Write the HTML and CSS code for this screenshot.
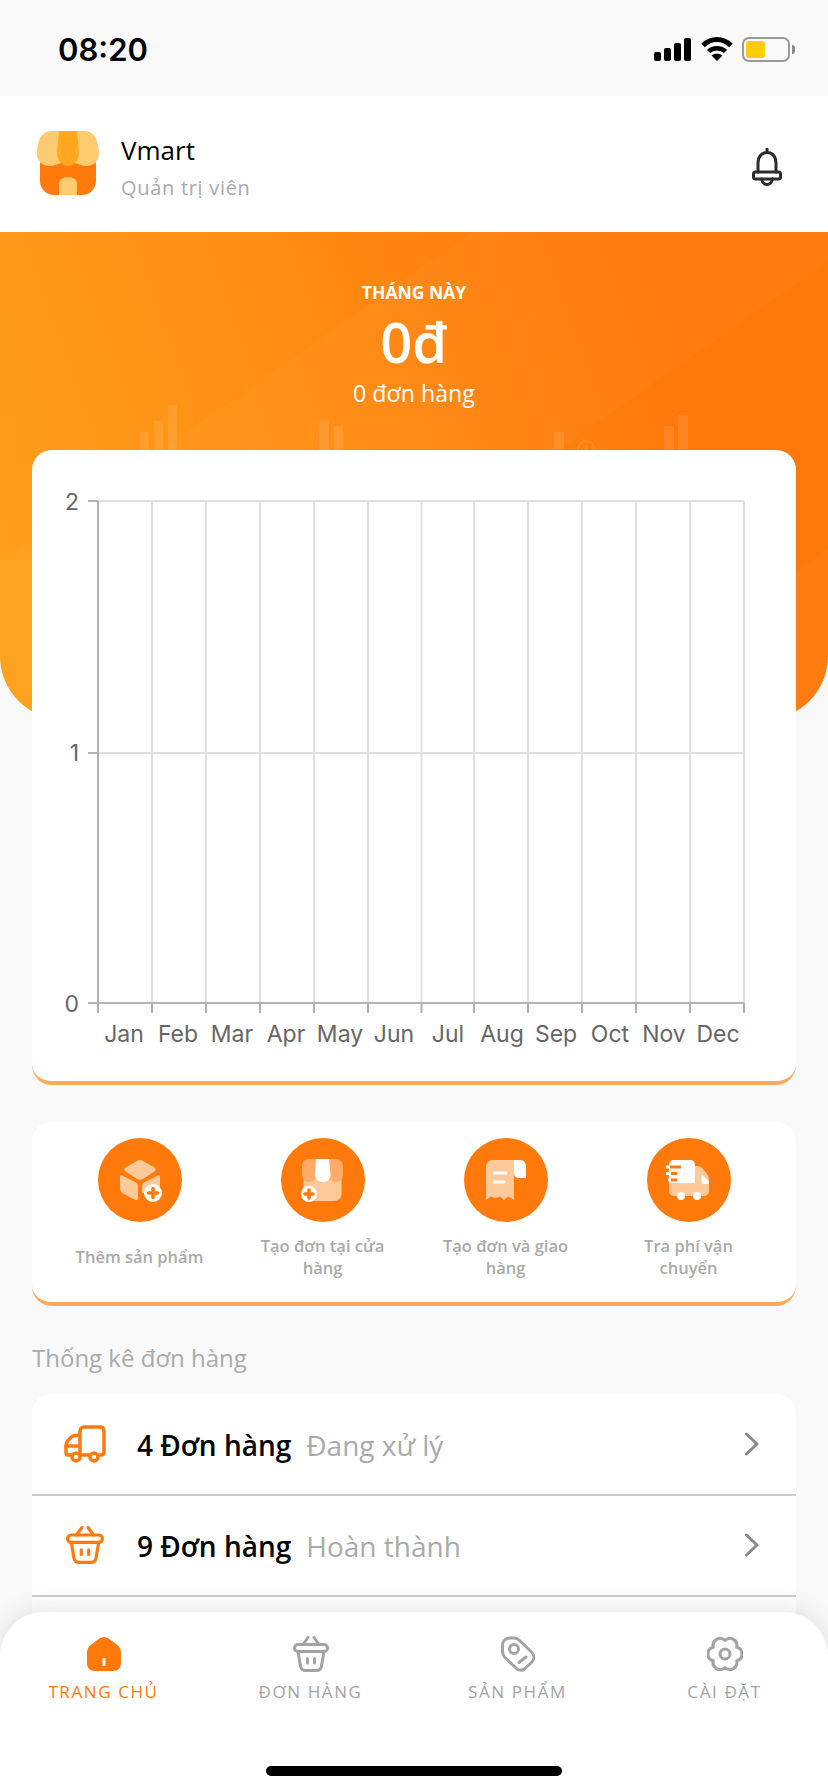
FILE: index.html
```html
<!DOCTYPE html>
<html lang="vi">
<head>
<meta charset="utf-8">
<title>Vmart</title>
<link rel="stylesheet" href="styles.css">
</head>
<body>
<svg class="defs" width="0" height="0" aria-hidden="true">
  <symbol id="basket" viewBox="0 0 36 36">
    <path d="M10 8.500 15 1.500M26 8.500 21 1.500M5 15.500 7.500 30C8 33 9.500 34.500 12.500 34.500H23.500C26.500 34.500 28 33 28.500 30L31 15.500M14.500 22.500V27M21.500 22.500V27" fill="none" stroke="currentColor" stroke-width="3" stroke-linecap="round" stroke-linejoin="round"/>
    <rect x="1.500" y="8.500" width="33" height="7" rx="3.500" fill="none" stroke="currentColor" stroke-width="3"/>
  </symbol>
</svg>
<div class="app">
  <div class="status">
    <span class="time">08:20</span>
    <div class="status-icons">
      <svg class="signal" width="37" height="23" viewBox="0 0 37 23"><rect y="14" width="7" height="9" rx="2"/><rect x="10" y="10" width="7" height="13" rx="2"/><rect x="20" y="5" width="7" height="18" rx="2"/><rect x="30" width="7" height="23" rx="2"/></svg>
      <svg class="wifi" width="32" height="24" viewBox="0 0 32 24"><path d="M2 8.500C10 .5 22 .5 30 8.500" fill="none" stroke="#000" stroke-width="5"/><path d="M7.500 14.500C12 10 20 10 24.500 14.500" fill="none" stroke="#000" stroke-width="4.500"/><path d="M16 24 10.500 18.500C13 16 19 16 21.500 18.500Z"/></svg>
      <div class="battery"><div class="battery-level"></div></div>
      <div class="battery-nub"></div>
    </div>
  </div>

  <header class="header">
    <svg class="logo" width="62" height="64" viewBox="0 0 62 64">
      <rect x="3" y="20" width="56" height="44" rx="14" fill="#ff7a0b"/>
      <path d="M14 0H48C57 0 62 9 62 23C62 30 56 35 50 35C43 35 39 31 31 31C23 31 19 35 12 35C6 35 0 30 0 23C0 9 5 0 14 0Z" fill="#ffcb70"/>
      <path d="M22 0H40L42 21C42 29 37 35 31 35C25 35 20 29 20 21Z" fill="#ffa81f"/>
      <path d="M22 64V53C22 49 26 46 31 46C36 46 40 49 40 53V64Z" fill="#ffcb70"/>
    </svg>
    <div class="brand">
      <div class="brand-name">Vmart</div>
      <div class="brand-role">Quản trị viên</div>
    </div>
    <svg class="bell" width="30" height="38" viewBox="0 0 30 38" fill="none" stroke="#2c2c2c" stroke-width="3" stroke-linecap="round">
      <path d="M6 24V15C6 8.500 10 4.500 15 4.500C20 4.500 24 8.500 24 15V24M15 1V4M9.500 31C10.500 35 12.500 36.500 15 36.500C17.500 36.500 19.500 35 20.500 31"/>
      <rect x="1.500" y="24" width="27" height="7" rx="2"/>
    </svg>
  </header>

  <section class="hero">
    <svg class="hero-deco" width="828" height="218" viewBox="0 0 828 218" fill="#fff" fill-opacity=".1">
      <rect x="140" y="200" width="9" height="18"/><rect x="154" y="189" width="9" height="29"/><rect x="168" y="173" width="9" height="45"/>
      <rect x="319" y="189" width="10" height="29"/><rect x="334" y="194" width="9" height="24"/>
      <rect x="554" y="200" width="10" height="18"/>
      <circle cx="586" cy="217" r="8" fill="none" stroke="#fff" stroke-opacity=".1" stroke-width="2"/><circle cx="586" cy="216" r="2"/>
      <rect x="664" y="194" width="10" height="24"/><rect x="678" y="183" width="10" height="35"/>
    </svg>
    <div class="hero-label">THÁNG NÀY</div>
    <div class="hero-amount">0đ</div>
    <div class="hero-orders">0 đơn hàng</div>
  </section>

  <section class="card chart-card">
    <svg class="chart" width="764" height="631" viewBox="0 0 764 631">
      <g class="grid">
        <path d="M66 51H712M66 303H712"/>
        <path d="M120 51V553M174 51V553M228 51V553M282 51V553M336 51V553M389.500 51V553M442 51V553M496 51V553M550 51V553M604 51V553M658 51V553M712 51V553"/>
      </g>
      <path class="axis" d="M56 51H66M56 303H66M66 51V563M56 553H712M120 553V563M174 553V563M228 553V563M282 553V563M336 553V563M389.500 553V563M442 553V563M496 553V563M550 553V563M604 553V563M658 553V563M712 553V563"/>
      <g class="y-labels">
        <text x="47" y="60">2</text><text x="47" y="311">1</text><text x="47" y="562">0</text>
      </g>
      <g class="x-labels">
        <text x="92" y="592">Jan</text><text x="146" y="592">Feb</text><text x="200" y="592">Mar</text><text x="254" y="592">Apr</text><text x="308" y="592">May</text><text x="362" y="592">Jun</text><text x="416" y="592">Jul</text><text x="470" y="592">Aug</text><text x="524" y="592">Sep</text><text x="578" y="592">Oct</text><text x="632" y="592">Nov</text><text x="686" y="592">Dec</text>
      </g>
    </svg>
  </section>

  <section class="card actions">
    <div class="action">
      <svg class="action-icon" width="84" height="84" viewBox="0 0 84 84">
        <circle cx="42" cy="42" r="42" fill="#ff7a0b"/>
        <path d="M39 23 27.500 29.500C26 30.500 26 32.500 27.500 33.500L39 41C41 42 43 42 45 41L56.500 33.500C58 32.500 58 30.500 56.500 29.500L45 23C43 21.700 41 21.700 39 23Z" fill="#ffc999"/>
        <path d="M24.500 37.500 38 44.500C39.500 45.300 40 46.500 40 48V60C40 62 38.500 62.500 37 61.800L26 56C23.500 54.700 22 53 22 50V39.500C22 37.500 23 36.800 24.500 37.500Z" fill="#ffc999"/>
        <path d="M59.500 37.500C61 36.800 62 37.500 62 39.500V55H44V48C44 46.500 44.500 45.300 46 44.500Z" fill="#ffc999"/>
        <circle cx="55" cy="55" r="9" fill="#fff"/>
        <path d="M55 50.500V59.500M50.500 55H59.500" stroke="#ff7a0b" stroke-width="3.500" stroke-linecap="round"/>
      </svg>
      <div class="action-label">Thêm sản phẩm</div>
    </div>
    <div class="action">
      <svg class="action-icon" width="84" height="84" viewBox="0 0 84 84">
        <circle cx="42" cy="42" r="42" fill="#ff7a0b"/>
        <rect x="22.500" y="30" width="38" height="33" rx="7" fill="#ffc999"/>
        <path d="M28 21H55C59.500 21 62 24 62 29V36C62 41 59 44 55.500 44C52 44 50 42 48 41H35C33 42 31 44 27.500 44C24 44 21 41 21 36V29C21 24 23.500 21 28 21Z" fill="#ffac69"/>
        <path d="M35 21H48L49.500 37C49.500 41.500 46 44 42 44C38 44 34 41.500 34 37Z" fill="#fff"/>
        <circle cx="28" cy="56" r="8" fill="#fff"/>
        <path d="M28 52V60M24 56H32" stroke="#ff7a0b" stroke-width="3.500" stroke-linecap="round"/>
      </svg>
      <div class="action-label">Tạo đơn tại cửa hàng</div>
    </div>
    <div class="action">
      <svg class="action-icon" width="84" height="84" viewBox="0 0 84 84">
        <circle cx="42" cy="42" r="42" fill="#ff7a0b"/>
        <path d="M50 22H29C25 22 22 25 22 29V62L27 58.500 31 60 36 58.500 40 62 44 58.500 50 62Z" fill="#ffc999"/>
        <path d="M50 22H56C60 22 62 25 62 29V40H55C51.500 40 50 38 50 35Z" fill="#fff"/>
        <path d="M30 35H42M30 44H40" stroke="#fff" stroke-width="3" stroke-linecap="round"/>
      </svg>
      <div class="action-label">Tạo đơn và giao hàng</div>
    </div>
    <div class="action">
      <svg class="action-icon" width="84" height="84" viewBox="0 0 84 84">
        <circle cx="42" cy="42" r="42" fill="#ff7a0b"/>
        <path d="M22 34V52C22 56 24 58 28 58H56C60 58 62 56 62 52V42C62 39 61 37 59 34.500L56 31C54.500 29 52.500 28 50 28H28Z" fill="#ffc999"/>
        <path d="M27 22H43C46 22 48 24 48 27V45H27C24 45 22 43 22 40V27C22 24 24 22 27 22Z" fill="#fff"/>
        <path d="M54.500 36 61 42.500C61.500 43 62 44 62 46H57C55 46 54.500 45 54.500 43Z" fill="#fff"/>
        <path d="M23 29H34M24 35.500H30M24 42H30" stroke="#ff7a0b" stroke-width="3"/>
        <path d="M19 29H22M19 35.500H22M21 42H24" stroke="#fff" stroke-width="3"/>
        <circle cx="34" cy="58" r="4" fill="#fff"/><circle cx="50" cy="58" r="4" fill="#fff"/>
      </svg>
      <div class="action-label">Tra phí vận chuyển</div>
    </div>
  </section>

  <h2 class="section-title">Thống kê đơn hàng</h2>

  <section class="orders">
    <div class="order-row">
      <svg class="order-icon" width="42" height="38" viewBox="0 0 42 38" fill="none" stroke="#ff7a0b" stroke-width="3.500" stroke-linejoin="round" stroke-linecap="round">
        <path d="M16 29V6C16 3.500 18 2 20 2H36C38.500 2 40 3.500 40 6V27C40 29 39 30 37 30H35M25 30H17M8 30H4C2.500 30 2 29 2 27.500V21C2 18.500 2.500 17 4 15.500L7.500 12C8.500 11 10 10.500 12 10.500H16"/>
        <path d="M2 21H15"/>
        <circle cx="12" cy="32" r="4"/><circle cx="30" cy="32" r="4"/>
      </svg>
      <span class="order-count">4 Đơn hàng</span>
      <span class="order-status">Đang xử lý</span>
      <svg class="chevron" width="16" height="24" viewBox="0 0 16 24"><path d="M2.500 2 13 12 2.500 22" fill="none" stroke="#888" stroke-width="3" stroke-linecap="round" stroke-linejoin="round"/></svg>
    </div>
    <div class="order-row">
      <svg class="order-icon basket-icon" width="38" height="38"><use href="#basket"/></svg>
      <span class="order-count">9 Đơn hàng</span>
      <span class="order-status">Hoàn thành</span>
      <svg class="chevron" width="16" height="24" viewBox="0 0 16 24"><path d="M2.500 2 13 12 2.500 22" fill="none" stroke="#888" stroke-width="3" stroke-linecap="round" stroke-linejoin="round"/></svg>
    </div>
  </section>

  <nav class="tabbar">
    <div class="tabs">
      <div class="tab tab-active">
        <svg width="36" height="36" viewBox="-1 -1 36 36"><path d="M17 0C19 0 21 1 23 2.500L31 8.500C33 10.500 34 13 34 16V26C34 31 31 34 26 34H8C3 34 0 31 0 26V16C0 13 1 10.500 3 8.500L11 2.500C13 1 15 0 17 0Z" fill="#ff7a0b"/><rect x="15.500" y="21" width="3" height="8" rx="1" fill="#fff"/></svg>
        <span>TRANG CHỦ</span>
      </div>
      <div class="tab">
        <svg width="36" height="36"><use href="#basket"/></svg>
        <span>ĐƠN HÀNG</span>
      </div>
      <div class="tab">
        <svg width="36" height="36" viewBox="0 0 36 36" fill="none" stroke="currentColor" stroke-width="3" stroke-linecap="round" stroke-linejoin="round">
          <path d="M10 2H14C16 2 18 3 19.500 4.500L31.500 16C34.500 19 34.500 23 32 26L25 32.500C22 35 18.500 35 16 32L4.500 21C3 19.500 2.500 17.500 2.500 15V9C2.500 5 6 2 10 2Z"/>
          <circle cx="14" cy="13" r="4.500"/>
          <path d="M19 26.500 26 21"/>
        </svg>
        <span>SẢN PHẨM</span>
      </div>
      <div class="tab">
        <svg width="36" height="36" viewBox="0 0 36 36" fill="none" stroke="currentColor" stroke-width="3" stroke-linejoin="round">
          <path d="M18 4.500A7 7 0 0 1 29.700 11.200A7 7 0 0 1 29.700 24.800A7 7 0 0 1 18 31.500A7 7 0 0 1 6.300 24.800A7 7 0 0 1 6.300 11.200A7 7 0 0 1 18 4.500Z"/>
          <circle cx="18" cy="18" r="5"/>
        </svg>
        <span>CÀI ĐẶT</span>
      </div>
    </div>
    <div class="home-indicator"></div>
  </nav>
</div>
</body>
</html>
```

FILE: styles.css
```css
* { box-sizing: border-box; }
html, body { margin: 0; padding: 0; }
body { background: #f9f9f9; font-family: "Open Sans", "Liberation Sans", sans-serif; }
.defs { position: absolute; }
.app { position: relative; width: 828px; height: 1792px; overflow: hidden; display: flex; flex-direction: column; background: #f9f9f9; }

.status { height: 96px; flex: none; display: flex; align-items: center; justify-content: space-between; padding: 0 33px 0 58px; }
.time { font-family: Inter, "Liberation Sans", sans-serif; font-weight: 600; font-size: 31px; color: #000; position: relative; top: 1px; }
.status-icons { display: flex; align-items: center; position: relative; top: 1px; }
.signal { margin-right: 10px; }
.wifi { margin-right: 9px; }
.battery { width: 48px; height: 25px; border: 2px solid #999; border-radius: 7px; padding: 2px; }
.battery-level { width: 19px; height: 17px; background: #ffcc0a; border-radius: 3px; }
.battery-nub { width: 3px; height: 9px; margin-left: 2px; background: #888; border-radius: 0 3px 3px 0; }

.header { height: 136px; flex: none; background: #fff; display: flex; align-items: center; padding: 0 46px 0 37px; }
.logo { position: relative; top: -1px; }
.brand { margin-left: 22px; flex: 1; }
.brand-name { font-size: 26px; line-height: 36px; font-weight: 500; color: #000; position: relative; top: 1px; }
.brand-role { font-size: 20px; line-height: 28px; color: #aaa; letter-spacing: .7px; margin-top: 3px; position: relative; top: 4px; }
.bell { position: relative; top: 3px; }

.hero { position: relative; height: 488px; flex: none; text-align: center; color: #fff; padding-top: 48px; border-radius: 0 0 64px 64px; overflow: hidden;
  background:
    linear-gradient(145deg, rgba(255,255,255,0) 31%, rgba(255,255,255,.025) 31%, rgba(255,255,255,.025) 57%, rgba(255,255,255,0) 57%),
    linear-gradient(145deg, rgba(255,255,255,0) 84%, rgba(255,255,255,.03) 84%),
    linear-gradient(70deg, #ffa01c 5%, #ff780a 80%); }
.hero-deco { position: absolute; left: 0; top: 0; }
.hero-label { position: relative; font-size: 17.500px; line-height: 24px; font-weight: 700; }
.hero-amount { position: relative; font-size: 56px; line-height: 75px; font-weight: 600; }
.hero-orders { position: relative; font-size: 23.200px; line-height: 28px; }

.card { background: #fff; margin-left: 32px; margin-right: 32px; flex: none; border-radius: 20px; }
.chart-card { margin-top: -270px; height: 635px; border-bottom: 4px solid #ffa95f; position: relative; }
.chart { display: block; }
.grid path { fill: none; stroke: #e0e0e0; stroke-width: 2; }
.axis { fill: none; stroke: #b2b2b2; stroke-width: 2; }
.y-labels text, .x-labels text { font-family: Inter, "Liberation Sans", sans-serif; font-size: 23px; fill: #666; }
.y-labels text { text-anchor: end; }
.x-labels text { text-anchor: middle; }

.actions { margin-top: 37px; height: 184px; border-bottom: 4px solid #ffa95f; padding: 16px 16px 0; display: grid; grid-template-columns: repeat(4, 1fr); }
.action { display: flex; flex-direction: column; align-items: center; }
.action-icon { display: block; flex: none; }
.action-label { height: 44px; margin-top: 13px; width: 135px; display: flex; align-items: center; text-align: center; justify-content: center; font-size: 16.500px; line-height: 22px; font-weight: 600; color: #aaa; }

.section-title { margin: 35px 0 0 32px; font-size: 24px; line-height: 33px; font-weight: 400; color: #aaa; flex: none; }

.orders { margin: 20px 32px 0; background: #fff; border-radius: 20px 20px 0 0; flex: 1; }
.order-row { height: 101.500px; display: flex; align-items: center; border-bottom: 2px solid #ccc; padding: 0 36px 0 32px; }
.order-icon { flex: none; width: 42px; margin-right: 31px; }
.basket-icon { color: #ff7a0b; }
.order-count { font-size: 28px; font-weight: 600; color: #000; margin-right: 15px; position: relative; top: 1px; }
.order-status { font-size: 28px; color: #aaa; flex: 1; position: relative; top: 1px; }

.tabbar { position: absolute; left: 0; right: 0; bottom: 0; height: 180px; background: #fff; border-radius: 44px 44px 0 0; box-shadow: 0 -4px 24px rgba(0,0,0,.1); display: flex; flex-direction: column; }
.tabs { display: grid; grid-template-columns: repeat(4, 1fr); padding-top: 24px; }
.tab { display: flex; flex-direction: column; align-items: center; color: #a3a3a3; font-size: 17px; line-height: 24px; font-weight: 500; letter-spacing: 1.600px; }
.tab svg { display: block; margin-bottom: 8px; }
.tab-active { color: #ff7a0b; }
.home-indicator { width: 296px; height: 10px; border-radius: 5px; background: #000; margin: auto auto 16px; }
```
